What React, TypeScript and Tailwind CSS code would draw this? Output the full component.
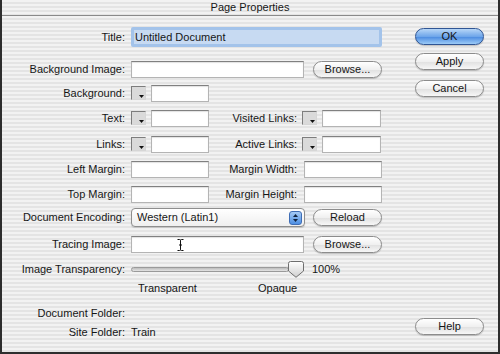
import type { ReactNode } from "react";

const stripes =
  "bg-[repeating-linear-gradient(180deg,#f2f2f2_0px,#f2f2f2_2px,#e4e4e4_2px,#e4e4e4_4px)]";

function Label({ children, w = "w-[123px]" }: { children: ReactNode; w?: string }) {
  return <div className={`${w} shrink-0 text-right`}>{children}</div>;
}

function Field({ w, children }: { w: string; children?: ReactNode }) {
  return (
    <div
      className={`relative h-[17px] ${w} shrink-0 border border-[#b4b4b4] border-t-[#808080] bg-white shadow-[inset_0_1px_1px_rgba(0,0,0,0.12)]`}
    >
      {children}
    </div>
  );
}

function AquaButton({ children, primary = false }: { children: ReactNode; primary?: boolean }) {
  return (
    <div
      className={`flex h-[17px] w-[69px] shrink-0 items-center justify-center rounded-full border text-[11px] shadow-[0_1px_1px_rgba(0,0,0,0.2)] ${
        primary
          ? "border-[#2f5594] bg-[linear-gradient(#b7d6f7,#6ea6ea_50%,#4a8ae0_52%,#9ccbf7)]"
          : "border-[#8c8c8c] bg-[linear-gradient(#ffffff,#f0f0f0_50%,#e0e0e0_52%,#f7f7f7)]"
      }`}
    >
      {children}
    </div>
  );
}

// little colour-picker square with the corner arrow
function Swatch() {
  return (
    <div className="relative h-[14px] w-[15px] shrink-0 border border-[#7d7d7d] border-b-[#d6d6d6] border-r-[#d6d6d6] bg-[#dadada]">
      <svg className="absolute bottom-[1px] right-[1px]" width="5" height="3" viewBox="0 0 5 3">
        <path d="M0 0H5L2.5 3Z" fill="#111" />
      </svg>
    </div>
  );
}

export default function App() {
  return (
    <div
      className={`flex h-[354px] w-[500px] flex-col overflow-hidden border-x-2 border-b-2 border-[#2e2e2e] text-[11px] text-[#161616] font-['Liberation_Sans',Arial,sans-serif] ${stripes}`}
    >
      {/* title bar */}
      <div className="flex h-[16px] shrink-0 items-center justify-center border-b border-[#8a8a8a] leading-none">
        Page Properties
      </div>

      <div className="flex flex-1">
        {/* form */}
        <div className="flex w-[411px] flex-col leading-none">
          <div className="mt-[11px] flex h-[20px] items-center">
            <Label>Title:</Label>
            <div className="ml-[6px] flex h-[20px] w-[251px] items-center rounded-[2px] border-[3px] border-[#a3c3ea] bg-[#c7daf2] pl-[1px]">
              Untitled Document
            </div>
          </div>

          <div className="mt-[13px] flex h-[18px] items-center">
            <Label>Background Image:</Label>
            <div className="ml-[6px]">
              <Field w="w-[173px]" />
            </div>
            <div className="ml-[9px]">
              <AquaButton>Browse...</AquaButton>
            </div>
          </div>

          <div className="mt-[6px] flex h-[18px] items-center">
            <Label>Background:</Label>
            <div className="ml-[6px]">
              <Swatch />
            </div>
            <div className="ml-[5px]">
              <Field w="w-[58px]" />
            </div>
          </div>

          <div className="mt-[7px] flex h-[18px] items-center">
            <Label>Text:</Label>
            <div className="ml-[6px]">
              <Swatch />
            </div>
            <div className="ml-[5px]">
              <Field w="w-[58px]" />
            </div>
            <Label w="w-[88px]">Visited Links:</Label>
            <div className="ml-[5px]">
              <Swatch />
            </div>
            <div className="ml-[5px]">
              <Field w="w-[59px]" />
            </div>
          </div>

          <div className="mt-[8px] flex h-[18px] items-center">
            <Label>Links:</Label>
            <div className="ml-[6px]">
              <Swatch />
            </div>
            <div className="ml-[5px]">
              <Field w="w-[58px]" />
            </div>
            <Label w="w-[88px]">Active Links:</Label>
            <div className="ml-[5px]">
              <Swatch />
            </div>
            <div className="ml-[5px]">
              <Field w="w-[59px]" />
            </div>
          </div>

          <div className="mt-[7px] flex h-[18px] items-center">
            <Label>Left Margin:</Label>
            <div className="ml-[6px]">
              <Field w="w-[78px]" />
            </div>
            <Label w="w-[88px]">Margin Width:</Label>
            <div className="ml-[7px]">
              <Field w="w-[78px]" />
            </div>
          </div>

          <div className="mt-[7px] flex h-[18px] items-center">
            <Label>Top Margin:</Label>
            <div className="ml-[6px]">
              <Field w="w-[78px]" />
            </div>
            <Label w="w-[88px]">Margin Height:</Label>
            <div className="ml-[7px]">
              <Field w="w-[78px]" />
            </div>
          </div>

          <div className="mt-[5px] flex h-[19px] items-center">
            <Label>Document Encoding:</Label>
            <div className="ml-[6px] flex h-[19px] w-[174px] items-center justify-between rounded-[4px] border border-[#8e8e8e] bg-[linear-gradient(#ffffff,#efefef)] pl-[5px] pr-[2px] shadow-[0_1px_1px_rgba(0,0,0,0.15)]">
              <span>Western (Latin1)</span>
              <div className="flex h-[14px] w-[13px] flex-col items-center justify-center gap-[2px] rounded-[3px] border border-[#3f6db5] bg-[linear-gradient(#a6cbf5,#4d8ee2)]">
                <svg width="5" height="3" viewBox="0 0 5 3">
                  <path d="M0 3H5L2.5 0Z" fill="#10233f" />
                </svg>
                <svg width="5" height="3" viewBox="0 0 5 3">
                  <path d="M0 0H5L2.5 3Z" fill="#10233f" />
                </svg>
              </div>
            </div>
            <div className="ml-[8px]">
              <AquaButton>Reload</AquaButton>
            </div>
          </div>

          <div className="mt-[8px] flex h-[18px] items-center">
            <Label>Tracing Image:</Label>
            <div className="ml-[6px]">
              <Field w="w-[173px]">
                {/* text cursor */}
                <svg className="absolute left-[45px] top-[2px]" width="7" height="12" viewBox="0 0 7 12">
                  <path d="M0.5 0.5H2.5Q3.5 0.5 3.5 1.5V10.5Q3.5 11.5 2.5 11.5H0.5M6.5 0.5H4.5Q3.5 0.5 3.5 1.5M3.5 10.5Q3.5 11.5 4.5 11.5H6.5M2 6H5" stroke="#111" strokeWidth="1" fill="none" />
                </svg>
              </Field>
            </div>
            <div className="ml-[9px]">
              <AquaButton>Browse...</AquaButton>
            </div>
          </div>

          <div className="mt-[7px] flex h-[18px] items-center">
            <Label>Image Transparency:</Label>
            <div className="ml-[6px] h-[5px] w-[158px] rounded-full border border-[#9a9a9a] bg-[linear-gradient(#bdbdbd,#e4e4e4)]" />
            <svg className="-ml-[1px] shrink-0" width="16" height="17" viewBox="0 0 16 17">
              <defs>
                <linearGradient id="thumb" x1="0" x2="0" y1="0" y2="1">
                  <stop offset="0" stopColor="#ffffff" />
                  <stop offset="1" stopColor="#cfcfcf" />
                </linearGradient>
              </defs>
              <path d="M2.5 0.5H13.5Q15.5 0.5 15.5 2.5V10L8 16.3L0.5 10V2.5Q0.5 0.5 2.5 0.5Z" fill="url(#thumb)" stroke="#6e6e6e" />
            </svg>
            <span className="ml-[8px]">100%</span>
          </div>

          <div className="mt-[3px] flex h-[14px] items-center">
            <span className="ml-[136px] w-[120px]">Transparent</span>
            <span>Opaque</span>
          </div>

          <div className="mt-[11px] flex h-[14px] items-center">
            <Label>Document Folder:</Label>
          </div>

          <div className="mt-[5px] flex h-[14px] items-center">
            <Label>Site Folder:</Label>
            <span className="ml-[6px]">Train</span>
          </div>
        </div>

        {/* buttons */}
        <div className="ml-[2px] flex flex-col pb-[17px] pt-[12px]">
          <AquaButton primary>OK</AquaButton>
          <div className="mt-[8px]">
            <AquaButton>Apply</AquaButton>
          </div>
          <div className="mt-[10px]">
            <AquaButton>Cancel</AquaButton>
          </div>
          <div className="mt-auto">
            <AquaButton>Help</AquaButton>
          </div>
        </div>
      </div>
    </div>
  );
}
